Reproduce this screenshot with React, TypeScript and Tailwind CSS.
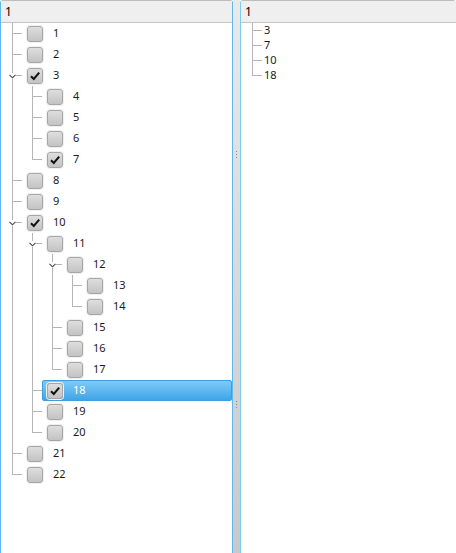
import React from "react";

type Node = { label: string; checked?: boolean; children?: Node[] };

type Row = {
  label: string;
  checked: boolean;
  guides: boolean[];
  isLast: boolean;
  expanded: boolean;
};

const tree: Node[] = [
  { label: "1" },
  { label: "2" },
  {
    label: "3",
    checked: true,
    children: [{ label: "4" }, { label: "5" }, { label: "6" }, { label: "7", checked: true }],
  },
  { label: "8" },
  { label: "9" },
  {
    label: "10",
    checked: true,
    children: [
      {
        label: "11",
        children: [
          { label: "12", children: [{ label: "13" }, { label: "14" }] },
          { label: "15" },
          { label: "16" },
          { label: "17" },
        ],
      },
      { label: "18", checked: true },
      { label: "19" },
      { label: "20" },
    ],
  },
  { label: "21" },
  { label: "22" },
];

function flatten(nodes: Node[], guides: boolean[] = []): Row[] {
  const out: Row[] = [];
  nodes.forEach((n, i) => {
    const isLast = i === nodes.length - 1;
    out.push({
      label: n.label,
      checked: !!n.checked,
      guides,
      isLast,
      expanded: !!n.children?.length,
    });
    if (n.children) out.push(...flatten(n.children, [...guides, !isLast]));
  });
  return out;
}

const rows = flatten(tree);
const picked = ["3", "7", "10", "18"];

function Checkbox({ checked }: { checked: boolean }) {
  return (
    <div className="flex h-[16px] w-[16px] shrink-0 items-center justify-center rounded-[3px] border border-[#a6a6a6] bg-gradient-to-b from-[#dedede] to-[#c3c3c3] shadow-[0_0_0_1px_#f0f0f0]">
      {checked && (
        <svg width="12" height="12" viewBox="0 0 12 12">
          <path d="M2 6.2 L4.8 9 L10.2 2.6" fill="none" stroke="#111" strokeWidth="2" />
        </svg>
      )}
    </div>
  );
}

function Chevron() {
  return (
    <div className="absolute left-[7px] top-[8px] flex h-[6px] w-[7px] items-center justify-center bg-white">
      <svg width="7" height="5" viewBox="0 0 7 5">
        <path d="M0.5 0.8 L3.5 3.8 L6.5 0.8" fill="none" stroke="#444" strokeWidth="1.1" />
      </svg>
    </div>
  );
}

function Header() {
  return (
    <div className="flex h-[22px] shrink-0 items-center border-b border-[#c4c4c4] bg-[#efefef] pl-[4px] text-[12px] text-black">
      1
    </div>
  );
}

export default function App() {
  return (
    <div
      className="flex h-[553px] w-[456px] overflow-hidden bg-white text-[11px] text-[#1a1a1a]"
      style={{ fontFamily: '"Noto Sans", "DejaVu Sans", sans-serif' }}
    >
      <div className="flex w-[233px] shrink-0 flex-col rounded-t-[3px] border border-b-0 border-[#5cb9e8] border-t-[#bdbdbd] bg-white">
        <Header />
        <div className="flex flex-col pl-[1px]">
          {rows.map((r) => {
            const selected = r.label === "18";
            return (
              <div key={r.label} className="flex h-[21px] items-center">
                {r.guides.map((g, i) => (
                  <div key={i} className="relative h-full w-[20px] shrink-0">
                    {g && <div className="absolute left-[10px] top-0 h-full w-px bg-[#b5b5b5]" />}
                  </div>
                ))}
                <div className="relative h-full w-[20px] shrink-0">
                  <div
                    className={
                      r.isLast
                        ? "absolute left-[10px] top-0 h-[11px] w-px bg-[#b5b5b5]"
                        : "absolute left-[10px] top-0 h-full w-px bg-[#b5b5b5]"
                    }
                  />
                  <div className="absolute left-[10px] top-[10px] h-px w-[10px] bg-[#b5b5b5]" />
                  {r.expanded && <Chevron />}
                </div>
                <div
                  className={
                    selected
                      ? "flex h-full flex-1 items-center rounded-[2px] border border-[#3d9fe2] bg-gradient-to-b from-[#7ccbf8] to-[#3fa5e7] pl-[4px] text-white"
                      : "flex h-full flex-1 items-center pl-[5px]"
                  }
                >
                  <Checkbox checked={r.checked} />
                  <span className="ml-[10px]">{r.label}</span>
                </div>
              </div>
            );
          })}
        </div>
      </div>

      <div className="relative w-[7px] shrink-0 bg-gradient-to-b from-[#e9e9e9] to-[#c9c9c9]">
        <div className="absolute left-[3px] top-[151px] flex flex-col gap-[2px]">
          <div className="h-px w-px bg-[#888]" />
          <div className="h-px w-px bg-[#888]" />
          <div className="h-px w-px bg-[#888]" />
        </div>
        <div className="absolute left-[3px] top-[401px] flex flex-col gap-[2px]">
          <div className="h-px w-px bg-[#888]" />
          <div className="h-px w-px bg-[#888]" />
          <div className="h-px w-px bg-[#888]" />
        </div>
      </div>

      <div className="flex flex-1 flex-col rounded-t-[3px] border border-b-0 border-r-0 border-[#7ccdf2] border-t-[#bdbdbd] bg-white">
        <Header />
        <div className="flex flex-col pl-[1px]">
          {picked.map((p, i) => (
            <div key={p} className="flex h-[15px] items-center">
              <div className="relative h-full w-[20px] shrink-0">
                <div
                  className={
                    i === picked.length - 1
                      ? "absolute left-[10px] top-0 h-[8px] w-px bg-[#b5b5b5]"
                      : "absolute left-[10px] top-0 h-full w-px bg-[#b5b5b5]"
                  }
                />
                <div className="absolute left-[10px] top-[7px] h-px w-[10px] bg-[#b5b5b5]" />
              </div>
              <span className="ml-[2px]">{p}</span>
            </div>
          ))}
        </div>
      </div>
    </div>
  );
}
